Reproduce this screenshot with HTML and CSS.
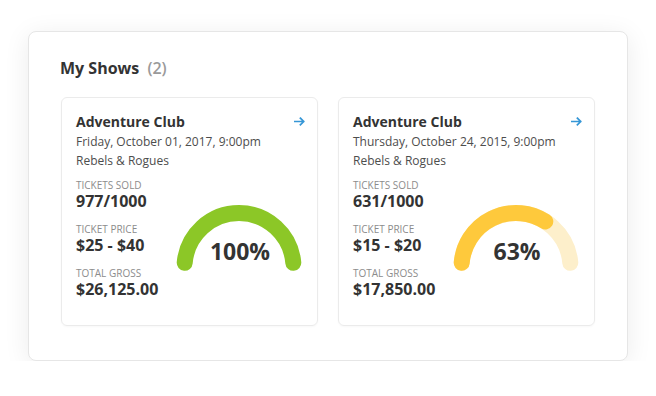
FILE: index.html
```html
<!DOCTYPE html>
<html lang="en">
<head>
<meta charset="utf-8">
<title>My Shows</title>
<link rel="stylesheet" href="styles.css">
</head>
<body>
<section class="panel">
  <h2 class="panel-title">My Shows <span class="count">(2)</span></h2>
  <div class="cards">
    <article class="card">
      <header class="card-head">
        <h3 class="show-name">Adventure Club</h3>
        <svg class="go" width="11" height="9" viewBox="0 0 11 9" aria-hidden="true"><path d="M0.5 4.5H9.6M6.4 1.2L9.7 4.5L6.4 7.8" fill="none" stroke="#3596d6" stroke-width="1.7" stroke-linecap="square"/></svg>
      </header>
      <p class="line">Friday, October 01, 2017, 9:00pm</p>
      <p class="line">Rebels &amp; Rogues</p>
      <div class="body">
        <dl class="stats">
          <dt>TICKETS SOLD</dt><dd>977/1000</dd>
          <dt>TICKET PRICE</dt><dd>$25 - $40</dd>
          <dt>TOTAL GROSS</dt><dd>$26,125.00</dd>
        </dl>
        <div class="gauge">
          <svg width="126" height="72" viewBox="0 0 126 72" aria-hidden="true">
            <path d="M8.71 61.75A54.5 54.5 0 0 1 117.29 61.75" fill="none" stroke="#8cc727" stroke-width="16" stroke-linecap="round"/>
          </svg>
          <span class="pct">100%</span>
        </div>
      </div>
    </article>
    <article class="card">
      <header class="card-head">
        <h3 class="show-name">Adventure Club</h3>
        <svg class="go" width="11" height="9" viewBox="0 0 11 9" aria-hidden="true"><path d="M0.5 4.5H9.6M6.4 1.2L9.7 4.5L6.4 7.8" fill="none" stroke="#3596d6" stroke-width="1.7" stroke-linecap="square"/></svg>
      </header>
      <p class="line">Thursday, October 24, 2015, 9:00pm</p>
      <p class="line">Rebels &amp; Rogues</p>
      <div class="body">
        <dl class="stats">
          <dt>TICKETS SOLD</dt><dd>631/1000</dd>
          <dt>TICKET PRICE</dt><dd>$15 - $20</dd>
          <dt>TOTAL GROSS</dt><dd>$17,850.00</dd>
        </dl>
        <div class="gauge">
          <svg width="126" height="72" viewBox="0 0 126 72" aria-hidden="true">
            <path d="M8.71 61.75A54.5 54.5 0 0 1 117.29 61.75" fill="none" stroke="#fdefcb" stroke-width="16" stroke-linecap="round"/>
            <path d="M8.71 61.75A54.5 54.5 0 0 1 92.3 20.5" fill="none" stroke="#fec93c" stroke-width="16" stroke-linecap="round"/>
          </svg>
          <span class="pct">63%</span>
        </div>
      </div>
    </article>
  </div>
</section>
</body>
</html>
```

FILE: styles.css
```css
* { box-sizing: border-box; }

html, body {
  margin: 0;
  padding: 0;
  background: #ffffff;
}

body {
  font-family: "Open Sans", "DejaVu Sans", sans-serif;
  color: #333333;
  padding: 31px 0 0 28px;
}

.panel {
  width: 600px;
  background: #ffffff;
  border: 1px solid #e6e6e6;
  border-radius: 8px;
  box-shadow: 0 4px 26px rgba(0, 0, 0, 0.08);
  padding: 25px 32px 34px 31px;
}

.panel-title {
  margin: 0 0 18px 0;
  font-size: 16px;
  line-height: 22px;
  font-weight: 700;
  color: #333333;
}

.count {
  margin-left: 4px;
  color: #9a9a9a;
  font-weight: 600;
}

.cards {
  display: flex;
  gap: 20px;
  margin-left: 1px;
}

.card {
  width: 257px;
  border: 1px solid #ebebeb;
  border-radius: 6px;
  padding: 14px 12px 27px 14px;
  box-shadow: 0 1px 2px rgba(0, 0, 0, 0.03);
}

.card-head {
  display: flex;
  justify-content: space-between;
  align-items: center;
  height: 20px;
}

.show-name {
  margin: 0;
  font-size: 14px;
  line-height: 20px;
  font-weight: 700;
  color: #333333;
}

.go {
  display: block;
  margin-top: -2px;
}

.line {
  margin: 0;
  font-size: 12px;
  line-height: 19px;
  color: #4d4d4d;
}

.body {
  display: flex;
  margin-top: 8px;
}

.stats {
  margin: 0;
  width: 100px;
  flex: none;
}

.stats dt {
  font-size: 10px;
  line-height: 14px;
  color: #8c8c8c;
}

.stats dd {
  margin: 0 0 12px 0;
  font-size: 16px;
  line-height: 18px;
  font-weight: 700;
  color: #333333;
}

.stats dd:last-child {
  margin-bottom: 0;
}

.gauge {
  position: relative;
  width: 126px;
  height: 72px;
  margin-top: 23px;
}

.gauge svg {
  display: block;
}

.pct {
  position: absolute;
  left: 2px;
  right: 0;
  top: 35px;
  text-align: center;
  font-size: 23px;
  line-height: 30px;
  font-weight: 700;
  color: #333333;
}
```
